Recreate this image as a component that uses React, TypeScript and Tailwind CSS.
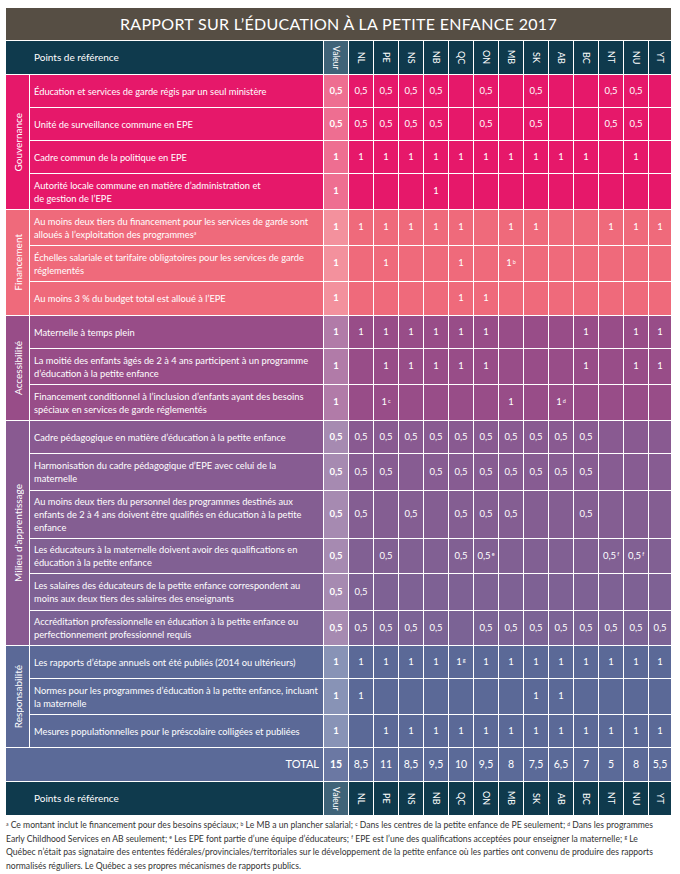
import type { ReactNode } from "react";

const provinces = ["NL", "PE", "NS", "NB", "QC", "ON", "MB", "SK", "AB", "BC", "NT", "NU", "YT"];

type Row = {
  label: ReactNode;
  val: string;
  cells: string;
  h: string;
  bg?: string;
};

type Section = {
  name: string;
  bg: string;
  valBg: string;
  rows: Row[];
};

// cells: 13 entries separated by "|", "^" marks a footnote letter
const sections: Section[] = [
  {
    name: "Gouvernance",
    bg: "bg-[#e6186a]",
    valBg: "bg-[#ee6e91]",
    rows: [
      { label: "Éducation et services de garde régis par un seul ministère", val: "0,5", cells: "0,5|0,5|0,5|0,5||0,5||0,5|||0,5|0,5|", h: "h-[32px]" },
      { label: "Unité de surveillance commune en EPE", val: "0,5", cells: "0,5|0,5|0,5|0,5||0,5||0,5|||0,5|0,5|", h: "h-[32px]" },
      { label: "Cadre commun de la politique en EPE", val: "1", cells: "1|1|1|1|1|1|1|1|1|1||1|", h: "h-[32px]" },
      {
        label: (
          <>
            Autorité locale commune en matière d’administration et
            <br />
            de gestion de l’EPE
          </>
        ),
        val: "1",
        cells: "|||1|||||||||",
        h: "h-[35px]",
      },
    ],
  },
  {
    name: "Financement",
    bg: "bg-[#ef6a7b]",
    valBg: "bg-[#f3919d]",
    rows: [
      {
        label: (
          <>
            Au moins deux tiers du financement pour les services de garde sont alloués à l’exploitation des programmes
            <sup className="text-[5px]">a</sup>
          </>
        ),
        val: "1",
        cells: "1|1|1|1|1||1|1|||1|1|1",
        h: "h-[35px]",
      },
      { label: "Échelles salariale et tarifaire obligatoires pour les services de garde réglementés", val: "1", cells: "|1|||1||1^b||||||", h: "h-[35px]" },
      { label: "Au moins 3 % du budget total est alloué à l’EPE", val: "1", cells: "||||1|1|||||||", h: "h-[33px]" },
    ],
  },
  {
    name: "Accessibilité",
    bg: "bg-[#984d88]",
    valBg: "bg-[#b17ba8]",
    rows: [
      { label: "Maternelle à temps plein", val: "1", cells: "1|1|1|1|1|1||||1||1|1", h: "h-[32px]" },
      { label: "La moitié des enfants âgés de 2 à 4 ans participent à un programme d’éducation à la petite enfance", val: "1", cells: "|1|1|1|1|1||||1||1|1", h: "h-[35px]" },
      { label: "Financement conditionnel à l’inclusion d’enfants ayant des besoins spéciaux en services de garde réglementés", val: "1", cells: "|1^c|||||1||1^d||||", h: "h-[35px]" },
    ],
  },
  {
    name: "Milieu d’apprentissage",
    bg: "bg-[#855d91]",
    valBg: "bg-[#a68ab1]",
    rows: [
      { label: "Cadre pédagogique en matière d’éducation à la petite enfance", val: "0,5", cells: "0,5|0,5|0,5|0,5|0,5|0,5|0,5|0,5|0,5|0,5|||", h: "h-[32px]", bg: "bg-[#895a91]" },
      { label: "Harmonisation du cadre pédagogique d’EPE avec celui de la maternelle", val: "0,5", cells: "0,5|0,5||0,5|0,5|0,5|0,5|0,5|0,5|0,5|||", h: "h-[36px]", bg: "bg-[#875c92]" },
      { label: "Au moins deux tiers du personnel des programmes destinés aux enfants de 2 à 4 ans doivent être qualifiés en éducation à la petite enfance", val: "0,5", cells: "0,5||0,5||0,5|0,5|0,5|||0,5|||", h: "h-[47px]", bg: "bg-[#845e92]" },
      { label: "Les éducateurs à la maternelle doivent avoir des qualifications en éducation à la petite enfance", val: "0,5", cells: "|0,5|||0,5|0,5^e|||||0,5^f|0,5^f|", h: "h-[34px]", bg: "bg-[#816093]" },
      { label: "Les salaires des éducateurs de la petite enfance correspondent au moins aux deux tiers des salaires des enseignants", val: "0,5", cells: "0,5||||||||||||", h: "h-[36px]", bg: "bg-[#7e6194]" },
      { label: "Accréditation professionnelle en éducation à la petite enfance ou perfectionnement professionnel requis", val: "0,5", cells: "0,5|0,5|0,5|0,5||0,5|0,5|0,5|0,5|0,5|0,5|0,5|0,5", h: "h-[34px]", bg: "bg-[#7b6395]" },
    ],
  },
  {
    name: "Responsabilité",
    bg: "bg-[#5b6997]",
    valBg: "bg-[#8893b6]",
    rows: [
      { label: "Les rapports d’étape annuels ont été publiés (2014 ou ultérieurs)", val: "1", cells: "1|1|1|1|1^g|1|1|1|1|1|1|1|1", h: "h-[32px]" },
      { label: "Normes pour les programmes d’éducation à la petite enfance, incluant la maternelle", val: "1", cells: "1|||||||1|1||||", h: "h-[35px]" },
      { label: "Mesures populationnelles pour le préscolaire colligées et publiées", val: "1", cells: "|1|1|1|1|1|1|1|1|1|1|1|1", h: "h-[32px]" },
    ],
  },
];

const totals = ["8,5", "11", "8,5", "9,5", "10", "9,5", "8", "7,5", "6,5", "7", "5", "8", "5,5"];

const rowGrid = "grid grid-cols-[293px_24px_repeat(12,24px)_22px] gap-px";
const wideGrid = "grid grid-cols-[317px_24px_repeat(12,24px)_22px] gap-px";

function Value({ v }: { v: string }) {
  if (!v) return null;
  const [main, note] = v.split("^");
  return (
    <span>
      {main}
      {note && <sup className="text-[5.5px] ml-px">{note}</sup>}
    </span>
  );
}

function HeaderRow() {
  return (
    <div className={`${wideGrid} h-[33px]`}>
      <div className="bg-[#0f3a4d] text-white text-[10px] flex items-center pl-[28px]">Points de référence</div>
      <div className="bg-[#3f6378] text-white text-[8.5px] flex items-center justify-center">
        <span className="[writing-mode:vertical-rl] leading-none">Valeur</span>
      </div>
      {provinces.map((p) => (
        <div key={p} className="bg-[#0f3a4d] text-white text-[9px] flex items-center justify-center">
          <span className="[writing-mode:vertical-rl] leading-none">{p}</span>
        </div>
      ))}
    </div>
  );
}

export default function App() {
  return (
    <div className="w-[680px] min-h-[874px] bg-white pt-[8px] px-[6px] font-['Lato',_'Open_Sans',_sans-serif]">
      <div className="w-[665px] bg-white flex flex-col gap-px">
        {/* title */}
        <div className="h-[32px] bg-[#564e44] text-white text-[16px] tracking-[0.3px] flex items-center justify-center uppercase">
          Rapport sur l’éducation à la petite enfance 2017
        </div>

        <HeaderRow />

        {/* sections */}
        {sections.map((s) => (
          <div key={s.name} className="flex gap-px">
            <div className={`w-[23px] shrink-0 ${s.rows[0].bg ?? s.bg} flex items-center justify-center`}>
              <span className="[writing-mode:vertical-rl] rotate-180 text-white text-[10px] leading-none whitespace-nowrap">
                {s.name}
              </span>
            </div>
            <div className="flex flex-col gap-px">
              {s.rows.map((r, i) => {
                const bg = r.bg ?? s.bg;
                return (
                  <div key={i} className={`${rowGrid} ${r.h}`}>
                    <div className={`${bg} text-white text-[9.3px] leading-[13px] flex items-center pl-[4px] pr-[2px]`}>
                      <span>{r.label}</span>
                    </div>
                    <div className={`${s.valBg} text-white text-[9.5px] font-bold flex items-center justify-center`}>
                      {r.val}
                    </div>
                    {r.cells.split("|").map((c, j) => (
                      <div key={j} className={`${bg} text-white text-[9.5px] flex items-center justify-center`}>
                        <Value v={c} />
                      </div>
                    ))}
                  </div>
                );
              })}
            </div>
          </div>
        ))}

        {/* total */}
        <div className={`${wideGrid} h-[33px]`}>
          <div className="bg-[#5b6a98] text-white text-[11px] flex items-center justify-end pr-[4px]">TOTAL</div>
          <div className="bg-[#6b78a3] text-white text-[10.5px] font-bold flex items-center justify-center">15</div>
          {totals.map((t, i) => (
            <div key={i} className="bg-[#5b6a98] text-white text-[10.5px] flex items-center justify-center">
              {t}
            </div>
          ))}
        </div>

        <HeaderRow />
      </div>

      {/* footnotes */}
      <p className="mt-[4px] text-[8.6px] leading-[13.5px] text-[#333333]">
        <sup className="text-[5px]">a</sup> Ce montant inclut le financement pour des besoins spéciaux;{" "}
        <sup className="text-[5px]">b</sup> Le MB a un plancher salarial; <sup className="text-[5px]">c</sup> Dans les centres de la
        petite enfance de PE seulement; <sup className="text-[5px]">d</sup> Dans les programmes
        <br />
        Early Childhood Services en AB seulement; <sup className="text-[5px]">e</sup> Les EPE font partie d’une équipe
        d’éducateurs; <sup className="text-[5px]">f</sup> EPE est l’une des qualifications acceptées pour enseigner la
        maternelle; <sup className="text-[5px]">g</sup> Le
        <br />
        Québec n’était pas signataire des ententes fédérales/provinciales/territoriales sur le développement de la petite
        enfance où les parties ont convenu de produire des rapports
        <br />
        normalisés réguliers. Le Québec a ses propres mécanismes de rapports publics.
      </p>
    </div>
  );
}
